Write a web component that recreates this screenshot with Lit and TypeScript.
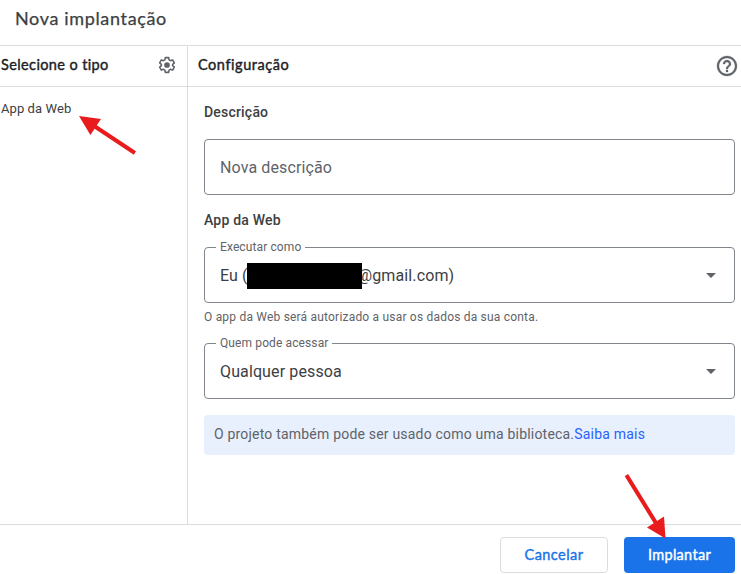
import { LitElement, html, css } from "lit";
import { customElement, property } from "lit/decorators.js";

@customElement("outlined-field")
class OutlinedField extends LitElement {
  @property() label = "";
  @property({ type: Boolean }) select = false;
  static styles = css`
    :host { display: block; }
    .field {
      box-sizing: border-box; height: 56px;
      border: 1px solid #80868b; border-radius: 4px;
      padding: 2px 18px 0 15px; position: relative;
      display: flex; align-items: center; justify-content: space-between;
      font: 400 16px/24px Roboto, sans-serif; color: #3c4043; letter-spacing: 0.12px;
    }
    .label {
      position: absolute; top: -9px; left: 11px; padding: 0 4px;
      background: #fff; color: #5f6368;
      font-size: 12px; line-height: 16px; letter-spacing: 0.11px;
    }
    .value { display: flex; align-items: center; white-space: pre; }
    .arrow { width: 10px; height: 5px; fill: #5f6368; margin-top: -1px; }
  `;
  render() {
    return html`<div class="field">
      ${this.label ? html`<span class="label">${this.label}</span>` : ""}
      <span class="value"><slot></slot></span>
      ${this.select ? html`<svg class="arrow" viewBox="0 0 10 5"><path d="M0 0h10L5 5z"/></svg>` : ""}
    </div>`;
  }
}

@customElement("app-root")
class AppRoot extends LitElement {
  static styles = css`
    :host {
      display: block; position: relative; width: 741px; height: 574px; overflow: hidden;
      background: #fff; color: #3c4043; font-family: Roboto, sans-serif;
    }
    .dialog { display: grid; height: 100%; grid-template: 45px 1fr 50px / 188px 1fr; }
    .title {
      grid-column: 1 / 3; padding-left: 15px; font: 400 18px/37px Lato, sans-serif;
      letter-spacing: 0.65px; border-bottom: 1px solid #dadce0; height: 45px;
      -webkit-text-stroke: 0.25px #3c4043;
    }
    .side { border-right: 1px solid #dadce0; margin-top: 1px; }
    .main { margin-top: 1px; min-width: 0; }
    .head {
      height: 40px; border-bottom: 1px solid #dadce0; display: flex;
      align-items: center; justify-content: space-between;
      font: 400 14.5px/20px Lato, sans-serif; color: #202124; letter-spacing: 0.38px;
      -webkit-text-stroke: 0.4px #202124;
    }
    .head span { position: relative; top: -1px; }
    .side .head { padding: 0 11px 0 1px; }
    .main .head { padding: 0 2px 0 10px; letter-spacing: 0.55px; }
    .gear { width: 18px; height: 18px; position: relative; top: -1px; }
    .help { width: 24px; height: 24px; fill: #5f6368; }
    .type { padding: 14px 0 0 1px; font-size: 13px; line-height: 16px; letter-spacing: 0.08px; }
    .form { padding: 15px 6px 0 16px; }
    .section { font-weight: 500; font-size: 14px; line-height: 20px; letter-spacing: 0.2px; }
    .description { margin-top: 17px; }
    .placeholder { color: #5f6368; }
    .app { margin: 15px 0 17px; }
    .mask { display: inline-block; width: 115px; height: 26px; background: #000; margin: 0 -4.5px 0 -0.5px; position: relative; }
    .hint { font-size: 12px; line-height: 16px; letter-spacing: 0.2px; color: #5f6368; margin: 6px 0 18px; }
    .note {
      height: 40px; margin-top: 16px; border-radius: 4px; background: #e8f0fe; color: #5f6368;
      padding-left: 10px; font-size: 14px; line-height: 39px; letter-spacing: 0.2px;
    }
    .link { color: #2962ff; }
    .actions {
      grid-column: 1 / 3; border-top: 1px solid #dadce0; display: flex;
      justify-content: flex-end; gap: 16px; padding: 12px 6px 0 0;
    }
    .btn {
      box-sizing: border-box; height: 36px; border-radius: 4px; text-align: center;
      font: 400 14.5px/33px Lato, sans-serif; letter-spacing: 0.45px;
      -webkit-text-stroke: 0.4px currentColor;
    }
    .cancel { width: 108px; border: 1px solid #dadce0; color: #1a73e8; }
    .deploy { width: 111px; background: #1a73e8; color: #fff; line-height: 36px; letter-spacing: 0.3px; }
    .marks { position: absolute; inset: 0; width: 741px; height: 574px; pointer-events: none; }
  `;
  render() {
    return html`
      <div class="dialog">
        <div class="title">Nova implantação</div>
        <div class="side">
          <div class="head"><span>Selecione o tipo</span>
            <svg class="gear" viewBox="0 0 24 24" fill="none" stroke="#5f6368">
              <path stroke-width="2.1" stroke-linejoin="round" d="M9.8 2.200h4.400l.6 3 1.800 1 2.900-1 2.300 3.900-2.300 2v1.800l2.300 2-2.300 3.900-2.900-1-1.800 1-.6 3H9.800l-.6-3-1.800-1-2.900 1-2.300-3.900 2.300-2v-1.800l-2.300-2 2.300-3.900 2.900 1 1.800-1z"/>
              <circle cx="12" cy="12" r="3.8" fill="#5f6368" stroke="none"/>
            </svg>
          </div>
          <div class="type">App da Web</div>
        </div>
        <div class="main">
          <div class="head"><span>Configuração</span>
            <svg class="help" viewBox="0 0 24 24"><path d="M11 18h2v-2h-2v2zm1-16C6.480 2 2 6.480 2 12s4.480 10 10 10 10-4.480 10-10S17.520 2 12 2zm0 18c-4.410 0-8-3.590-8-8s3.590-8 8-8 8 3.590 8 8-3.590 8-8 8zm0-14c-2.210 0-4 1.790-4 4h2c0-1.100.9-2 2-2s2 .9 2 2c0 2-3 1.750-3 5h2c0-2.250 3-2.500 3-5 0-2.210-1.790-4-4-4z" stroke="#5f6368" stroke-width=".3"/></svg>
          </div>
          <div class="form">
            <div class="section">Descrição</div>
            <outlined-field class="description"><span class="placeholder">Nova descrição</span></outlined-field>
            <div class="section app">App da Web</div>
            <outlined-field label="Executar como" select>Eu (<span class="mask"></span>@gmail.com)</outlined-field>
            <div class="hint">O app da Web será autorizado a usar os dados da sua conta.</div>
            <outlined-field label="Quem pode acessar" select>Qualquer pessoa</outlined-field>
            <div class="note">O projeto também pode ser usado como uma biblioteca.<span class="link">Saiba mais</span></div>
          </div>
        </div>
        <div class="actions">
          <div class="btn cancel">Cancelar</div>
          <div class="btn deploy">Implantar</div>
        </div>
      </div>
      <svg class="marks" viewBox="0 0 741 574" fill="#e81c1c">
        <path d="M79 116l22 3-4.200 6.300 39.200 26-2.200 3.400-39.200-26-4.200 6.300z"/>
        <path d="M665.500 538.500l-18.500-11 6.700-4.300-29-47 3.400-2.200 29 47 6.900-4.500z"/>
      </svg>`;
  }
}
